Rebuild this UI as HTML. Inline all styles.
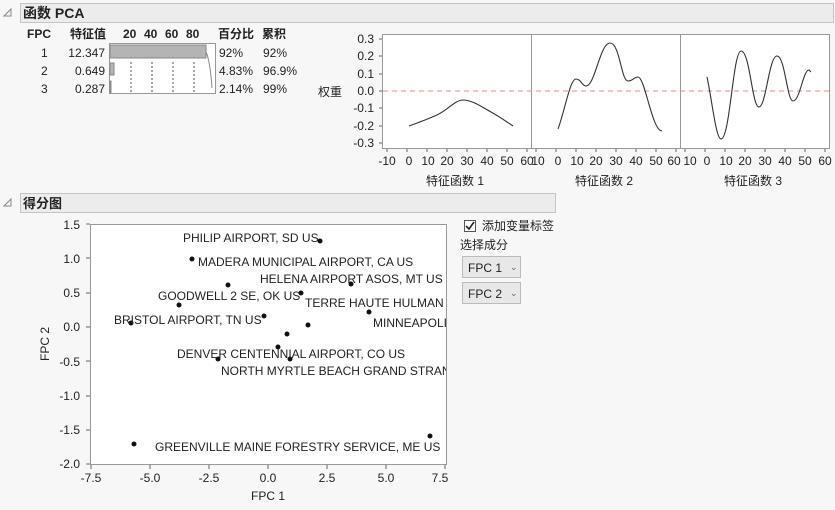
<!DOCTYPE html><html><head><meta charset="utf-8"><style>
body{margin:0;background:#f7f7f7;width:835px;height:510px;overflow:hidden;font-family:"Liberation Sans","Noto Sans CJK SC",sans-serif}
svg{position:absolute;left:0;top:0}
text{font-family:"Liberation Sans","Noto Sans CJK SC",sans-serif;font-size:12px;fill:#222}
</style></head><body>
<svg width="835" height="510" viewBox="0 0 835 510">
<rect x="20.5" y="3.5" width="813" height="19" fill="#ececec" stroke="#c4c4c4"/>
<path d="M4 16 L11 9 L11 16 Z" fill="none" stroke="#888"/>
<text x="23" y="18" style="font-size:14px;font-weight:bold">函数 PCA</text>
<g style="font-weight:bold">
<text x="27" y="38">FPC</text><text x="70" y="38">特征值</text>
<text x="123" y="38">20</text><text x="144" y="38">40</text><text x="165" y="38">60</text><text x="186" y="38">80</text>
<text x="218" y="38">百分比</text><text x="262" y="38">累积</text></g>
<text x="41" y="57">1</text><text x="41" y="75">2</text><text x="41" y="93">3</text>
<text x="105" y="57" text-anchor="end">12.347</text><text x="105" y="75" text-anchor="end">0.649</text><text x="105" y="93" text-anchor="end">0.287</text>
<rect x="109.5" y="43.5" width="106" height="50" fill="#fff" stroke="#999"/>
<g stroke="#555" stroke-dasharray="2,2"><line x1="131" y1="62" x2="131" y2="93"/><line x1="152" y1="62" x2="152" y2="93"/><line x1="173" y1="62" x2="173" y2="93"/><line x1="194" y1="62" x2="194" y2="93"/></g>
<rect x="110" y="45" width="96" height="13" fill="#b4b4b4" stroke="#888"/>
<rect x="110" y="63" width="4" height="12" fill="#b4b4b4" stroke="#888"/>
<rect x="110" y="81" width="1" height="12" fill="#b4b4b4" stroke="#888"/>
<path d="M206 52 Q210 60 212 88" stroke="#888" fill="none"/>
<text x="219" y="57">92%</text><text x="263" y="57">92%</text>
<text x="219" y="75">4.83%</text><text x="263" y="75">96.9%</text>
<text x="219" y="93">2.14%</text><text x="263" y="93">99%</text>
<rect x="382.5" y="34.5" width="447" height="114" fill="#fff" stroke="#999"/>
<line x1="531.5" y1="34" x2="531.5" y2="148" stroke="#999"/><line x1="680.5" y1="34" x2="680.5" y2="148" stroke="#999"/>
<line x1="383" y1="91" x2="829" y2="91" stroke="#e88" stroke-dasharray="5,4"/>
<text x="318" y="96">权重</text>
<g text-anchor="end"><text x="374" y="43">0.3</text><text x="374" y="60">0.2</text><text x="374" y="78">0.1</text><text x="374" y="95">0.0</text><text x="374" y="112">-0.1</text><text x="374" y="130">-0.2</text><text x="374" y="147">-0.3</text></g>
<g stroke="#666"><path d="M379 39h3M379 56h3M379 74h3M379 91h3M379 108h3M379 126h3M379 143h3"/>
<path d="M387 149v3M407 149v3M427 149v3M447 149v3M467 149v3M487 149v3M507 149v3M527 149v3M536 149v3M556 149v3M576 149v3M596 149v3M616 149v3M636 149v3M656 149v3M676 149v3M685 149v3M705 149v3M725 149v3M745 149v3M765 149v3M785 149v3M805 149v3M825 149v3"/></g>
<g text-anchor="middle"><text x="387" y="165">-10</text><text x="409" y="165">0</text><text x="428" y="165">10</text><text x="447" y="165">20</text><text x="467" y="165">30</text><text x="487" y="165">40</text><text x="507" y="165">50</text><text x="527" y="165">60</text>
<text x="538" y="165">10</text><text x="558" y="165">0</text><text x="577" y="165">10</text><text x="596" y="165">20</text><text x="616" y="165">30</text><text x="636" y="165">40</text><text x="656" y="165">50</text><text x="674" y="165">60</text>
<text x="690" y="165">10</text><text x="707" y="165">0</text><text x="726" y="165">10</text><text x="745" y="165">20</text><text x="765" y="165">30</text><text x="785" y="165">40</text><text x="805" y="165">50</text><text x="825" y="165">60</text>
<text x="455" y="185">特征函数 1</text><text x="604" y="185">特征函数 2</text><text x="753" y="185">特征函数 3</text></g>
<g fill="none" stroke="#333" stroke-width="1.1">
<path d="M409 126 C420 122 428 119 437 115 C448 110 455 100 463 100 C472 100 482 107 491 112 C500 117 507 122 513 126"/>
<path d="M558 129 C565 110 570 79 576 79 C581 79 582 86 586 86 C595 86 600 43 610 43 C620 43 621 81 628 81 C633 81 634 77 638 77 C645 77 652 131 662 131"/>
<path d="M707 77 C712 100 716 139 721 139 C730 139 733 51 741 51 C750 51 752 107 759 107 C766 107 769 56 777 56 C785 56 787 101 793 101 C800 101 803 70 809 70 L811 72"/>
</g>
<rect x="20.5" y="193.5" width="535" height="19" fill="#ececec" stroke="#c4c4c4"/>
<path d="M4 206 L11 199 L11 206 Z" fill="none" stroke="#888"/>
<text x="23" y="208" style="font-size:13px;font-weight:bold">得分图</text>
<rect x="90.5" y="224.5" width="356" height="240" fill="#fff" stroke="#999"/>
<g text-anchor="end"><text x="80" y="229">1.5</text><text x="80" y="263">1.0</text><text x="80" y="297">0.5</text><text x="80" y="331">0.0</text><text x="80" y="366">-0.5</text><text x="80" y="400">-1.0</text><text x="80" y="434">-1.5</text><text x="80" y="468">-2.0</text></g>
<g stroke="#666"><path d="M86 224h4M86 258h4M86 293h4M86 327h4M86 361h4M86 396h4M86 430h4M86 464h4M91 465v4M150 465v4M209 465v4M268 465v4M327 465v4M386 465v4M445 465v4"/></g>
<g text-anchor="middle"><text x="91" y="482">-7.5</text><text x="150" y="482">-5.0</text><text x="209" y="482">-2.5</text><text x="268" y="482">0.0</text><text x="327" y="482">2.5</text><text x="386" y="482">5.0</text><text x="440" y="482">7.5</text><text x="268" y="500">FPC 1</text></g>
<text transform="translate(49,344) rotate(-90)" text-anchor="middle">FPC 2</text>
<g fill="#111"><circle cx="320" cy="241" r="2.5"/><circle cx="192" cy="259" r="2.5"/><circle cx="228" cy="285" r="2.5"/><circle cx="351" cy="284" r="2.5"/><circle cx="301" cy="293" r="2.5"/><circle cx="179" cy="305" r="2.5"/><circle cx="369" cy="312" r="2.5"/><circle cx="131" cy="323" r="2.5"/><circle cx="264" cy="316" r="2.5"/><circle cx="308" cy="325" r="2.5"/><circle cx="287" cy="334" r="2.5"/><circle cx="278" cy="347" r="2.5"/><circle cx="218" cy="359" r="2.5"/><circle cx="290" cy="359" r="2.5"/><circle cx="134" cy="444" r="2.5"/><circle cx="430" cy="436" r="2.5"/></g>
<svg x="91" y="225" width="355" height="239" overflow="hidden"><g transform="translate(-91,-225)">
<text x="183" y="242">PHILIP AIRPORT, SD US</text>
<text x="198" y="266">MADERA MUNICIPAL AIRPORT, CA US</text>
<text x="260" y="283">HELENA AIRPORT ASOS, MT US</text>
<text x="158" y="300">GOODWELL 2 SE, OK US</text>
<text x="305" y="307">TERRE HAUTE HULMAN REGIONAL</text>
<text x="373" y="327">MINNEAPOLIS</text>
<text x="114" y="324">BRISTOL AIRPORT, TN US</text>
<text x="177" y="358">DENVER CENTENNIAL AIRPORT, CO US</text>
<text x="221" y="375">NORTH MYRTLE BEACH GRAND STRAND</text>
<text x="155" y="451">GREENVILLE MAINE FORESTRY SERVICE, ME US</text>
</g></svg>
<rect x="464.5" y="220.5" width="11" height="11" fill="#fff" stroke="#555"/>
<path d="M466 226 L469 229 L474 222" stroke="#222" stroke-width="1.6" fill="none"/>
<text x="482" y="230">添加变量标签</text>
<text x="460" y="249">选择成分</text>
<rect x="462.5" y="256.5" width="58" height="21" fill="#e8e8e8" stroke="#bbb"/>
<text x="468" y="272">FPC 1</text><text x="510" y="270" style="font-size:9px;fill:#666">⌄</text>
<rect x="462.5" y="282.5" width="58" height="21" fill="#e8e8e8" stroke="#bbb"/>
<text x="468" y="298">FPC 2</text><text x="510" y="296" style="font-size:9px;fill:#666">⌄</text>
</svg>
</body></html>
